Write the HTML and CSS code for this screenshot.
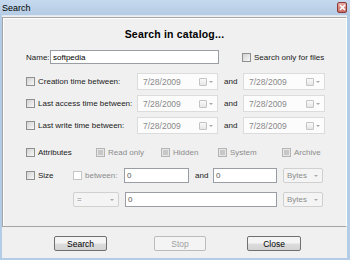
FILE: index.html
```html
<!DOCTYPE html>
<html>
<head>
<meta charset="utf-8">
<title>Search</title>
<link rel="stylesheet" href="styles.css">
</head>
<body>

<div class="window">

<!-- TITLE BAR -->
<div class="titlebar">
  <span class="title">Search</span>
  <span class="xbtn">
    <svg width="7" height="7" viewBox="0 0 7 7"><path d="M1 1L6 6M6 1L1 6" stroke="#fff" stroke-width="1.6"/></svg>
  </span>
</div>

<div class="client">

<div class="panel">
  <div class="heading">Search in catalog...</div>

  <div class="row name-row">
    <span class="lbl name-lbl">Name:</span>
    <div class="input name-input">softpedia</div>
    <label class="check files-check"><i class="cb"></i>Search only for files</label>
  </div>

  <div class="row date-row first">
    <label class="check dlabel"><i class="cb"></i>Creation time between:</label>
    <div class="date d1">7/28/2009<span class="dicon"><i class="sq"></i><i class="arr"></i></span></div>
    <span class="and">and</span>
    <div class="date d2">7/28/2009<span class="dicon"><i class="sq"></i><i class="arr"></i></span></div>
  </div>

  <div class="row date-row">
    <label class="check dlabel"><i class="cb"></i>Last access time between:</label>
    <div class="date d1">7/28/2009<span class="dicon"><i class="sq"></i><i class="arr"></i></span></div>
    <span class="and">and</span>
    <div class="date d2">7/28/2009<span class="dicon"><i class="sq"></i><i class="arr"></i></span></div>
  </div>

  <div class="row date-row">
    <label class="check dlabel"><i class="cb"></i>Last write time between:</label>
    <div class="date d1">7/28/2009<span class="dicon"><i class="sq"></i><i class="arr"></i></span></div>
    <span class="and">and</span>
    <div class="date d2">7/28/2009<span class="dicon"><i class="sq"></i><i class="arr"></i></span></div>
  </div>

  <div class="row attr-row">
    <label class="check a1"><i class="cb"></i>Attributes</label>
    <label class="check off a2"><i class="cb grey"></i>Read only</label>
    <label class="check off a3"><i class="cb grey"></i>Hidden</label>
    <label class="check off a4"><i class="cb grey"></i>System</label>
    <label class="check off a5"><i class="cb grey"></i>Archive</label>
  </div>

  <div class="row size-row">
    <label class="check s1"><i class="cb"></i>Size</label>
    <label class="check off s2"><i class="cb blank"></i>between:</label>
    <div class="input num n1">0</div>
    <span class="and small-and">and</span>
    <div class="input num n2">0</div>
    <div class="combo bytes">Bytes<i class="arr"></i></div>
  </div>

  <div class="row size-row2">
    <div class="combo eq">=<i class="arr"></i></div>
    <div class="input num n3">0</div>
    <div class="combo bytes">Bytes<i class="arr"></i></div>
  </div>
</div>

<div class="buttons">
  <button class="btn b-search">Search</button>
  <button class="btn b-stop" disabled>Stop</button>
  <button class="btn b-close">Close</button>
</div>

</div>
</div>

</body>
</html>
```

FILE: styles.css
```css
body{
  margin:0;
  font-family:"Liberation Sans",Arial,sans-serif;
  font-size:8px;
  color:#1a1a1a;
}

.window{
  width:350px;
  height:260px;
  background:#b4cde6;
  display:flex;
  flex-direction:column;
  overflow:hidden;
}

/* TITLE BAR */
.titlebar{
  height:15px;
  flex:none;
  display:flex;
  align-items:center;
  justify-content:space-between;
  padding:0 3px 0 2px;
  background:linear-gradient(#c6d9ee,#b5cce5);
}
.title{font-size:9px;color:#000;}
.xbtn{
  width:8px;
  height:9px;
  border:1px solid #8c3b3b;
  border-radius:2px;
  background:linear-gradient(#e9aaa2,#c96a62);
  display:flex;
  align-items:center;
  justify-content:center;
}

.client{
  flex:1;
  margin:0 3px 2px 2px;
  background:#f0f0f0;
  border-top:1px solid #dfe8f2;
  display:flex;
  flex-direction:column;
}

.panel{
  margin:1px 0 0 0;
  height:210px;
  border:1px solid #a6a6a6;
  border-right-color:#fff;
  box-shadow:inset 1px 1px 0 #fff;
  padding-left:23px;
  box-sizing:border-box;
}

.heading{
  margin-top:9px;
  height:14px;
  line-height:14px;
  text-align:center;
  font-weight:bold;
  font-size:10.5px;
  letter-spacing:0.2px;
  color:#000;
  padding-right:23px;
}

.row{display:flex;align-items:center;}

.check{display:flex;align-items:center;}
.cb{
  width:7px;
  height:7px;
  border:1px solid #8e8f8f;
  background:linear-gradient(135deg,#d2d2d2,#f8f8f8);
  margin-right:3px;
  flex:none;
}
.cb.grey{
  border-color:#b5b5b5;
  background:#c8c8c8;
  box-shadow:inset 0 0 0 1px #e6e6e6;
}
.cb.blank{
  border-color:#c6c6c6;
  background:#fff;
}
.off{color:#8c8c8c;}

.input{
  background:#fff;
  border:1px solid #9a9ea4;
  box-sizing:border-box;
  padding-left:2px;
  display:flex;
  align-items:center;
}

/* NAME */
.name-row{margin-top:9px;height:14px;}
.name-lbl{width:24px;}
.name-input{width:169px;height:14px;color:#000;}
.files-check{margin-left:23px;}

/* DATES */
.date-row{height:17px;margin-top:5px;}
.date-row.first{margin-top:9px;}
.dlabel{width:111px;}
.date{
  height:17px;
  box-sizing:border-box;
  background:#fcfcfc;
  border:1px solid #dcdcdc;
  color:#8a8a8a;
  font-size:8.5px;
  display:flex;
  align-items:center;
  padding-left:5px;
}
.d1{width:81px;}
.d2{width:82px;}
.dicon{margin-left:auto;margin-right:4px;display:flex;align-items:center;}
.sq{
  width:6px;
  height:6px;
  border:1px solid #c4c4c4;
  border-radius:1px;
  background:linear-gradient(#fafafa,#e6e6e6);
  margin-right:2px;
}
.arr{
  width:0;
  height:0;
  border-left:2px solid transparent;
  border-right:2px solid transparent;
  border-top:2px solid #a8a8a8;
}
.and{width:25px;padding-left:6px;box-sizing:border-box;}

/* ATTRIBUTES */
.attr-row{height:12px;margin-top:12px;}
.a1{width:70px;}
.a2{width:65px;}
.a3{width:57px;}
.a4{width:64px;}

/* SIZE */
.size-row{height:15px;margin-top:10px;}
.s1{width:47px;}
.s2{width:51px;}
.num{height:15px;color:#555;}
.n1{width:65px;}
.small-and{width:24px;}
.n2{width:64px;}
.combo{
  height:15px;
  box-sizing:border-box;
  border:1px solid #d0d0d0;
  border-radius:2px;
  background:#f4f4f4;
  color:#8c8c8c;
  display:flex;
  align-items:center;
  padding:0 4px 0 3px;
}
.combo .arr{margin-left:auto;}
.bytes{width:40px;margin-left:6px;}

.size-row2{height:15px;margin-top:9px;padding-left:47px;}
.eq{width:46px;}
.n3{width:152px;margin-left:6px;}

/* BUTTONS */
.buttons{
  flex:1;
  display:flex;
  align-items:center;
  padding:2px 0 0 52px;
}
.btn{
  font-family:"Liberation Sans",Arial,sans-serif;
  font-size:8.5px;
  height:15px;
  padding:0;
  border:1px solid #707070;
  border-radius:2px;
  background:linear-gradient(#f4f4f4 45%,#dcdcdc 55%,#d3d3d3);
  color:#000;
}
.b-search{width:53px;}
.b-stop{
  width:52px;
  margin-left:47px;
  border-color:#b8bcbf;
  background:#f4f4f4;
  color:#a0a0a0;
}
.b-close{width:54px;margin-left:41px;}
```
